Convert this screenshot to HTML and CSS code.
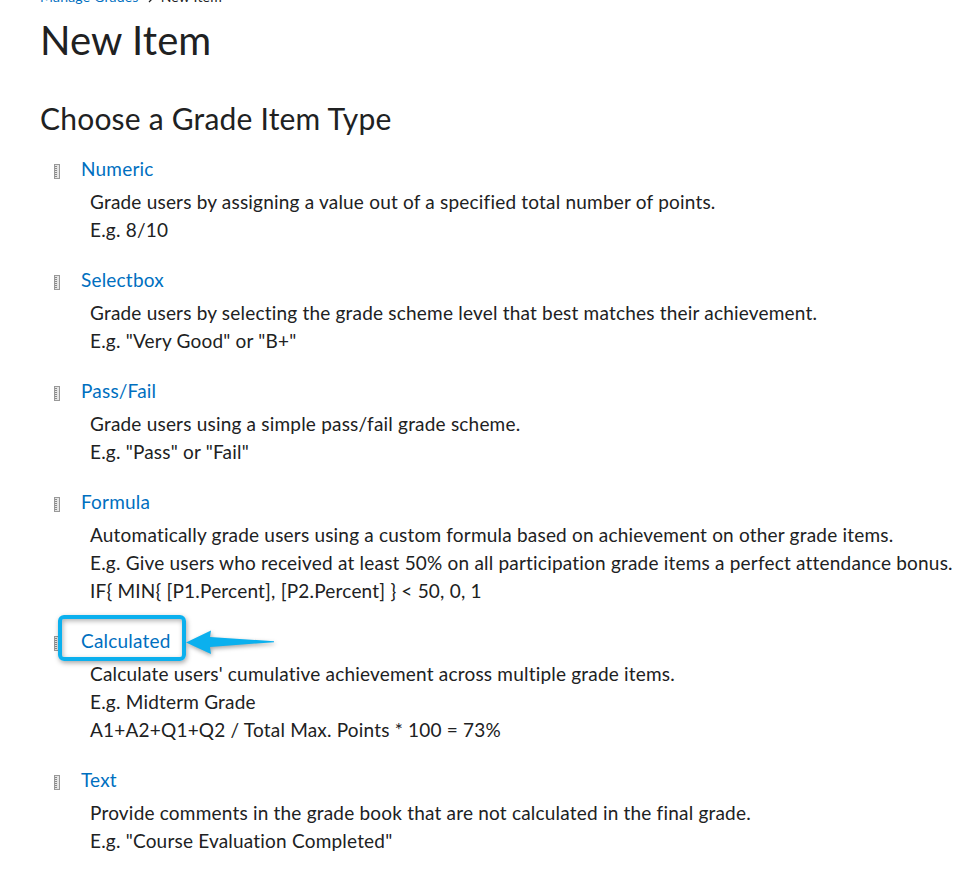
FILE: index.html
```html
<!DOCTYPE html>
<html lang="en">
<head>
  <meta charset="utf-8">
  <title>New Item</title>
  <link rel="stylesheet" href="styles.css">
</head>
<body>
  <svg class="sprite" width="0" height="0">
    <symbol id="ruler" viewBox="0 0 6 15">
      <rect x="0.5" y="0.5" width="5" height="14" fill="#e6e6e6" stroke="#999999"/>
      <path d="M1 2.5h2M1 4.5h2M1 6.5h2M1 8.5h2M1 10.5h2M1 12.5h2" stroke="#888888" fill="none"/>
    </symbol>
  </svg>

  <div class="page">
    <nav class="breadcrumb">
      <a href="#">Manage Grades</a>
      <svg class="chevron" width="6" height="10" viewBox="0 0 6 10"><path d="M1 1l4 4-4 4" fill="none" stroke="#202122" stroke-width="1.3"/></svg>
      <span>New Item</span>
    </nav>
    <h1>New Item</h1>
    <h2>Choose a Grade Item Type</h2>

    <ul class="types">
      <li>
        <div class="type-name"><svg class="icon"><use href="#ruler"/></svg><a href="#">Numeric</a></div>
        <p>Grade users by assigning a value out of a specified total number of points.<br>E.g. 8/10</p>
      </li>
      <li>
        <div class="type-name"><svg class="icon"><use href="#ruler"/></svg><a href="#">Selectbox</a></div>
        <p>Grade users by selecting the grade scheme level that best matches their achievement.<br>E.g. "Very Good" or "B+"</p>
      </li>
      <li>
        <div class="type-name"><svg class="icon"><use href="#ruler"/></svg><a href="#">Pass/Fail</a></div>
        <p>Grade users using a simple pass/fail grade scheme.<br>E.g. "Pass" or "Fail"</p>
      </li>
      <li>
        <div class="type-name"><svg class="icon"><use href="#ruler"/></svg><a href="#">Formula</a></div>
        <p>Automatically grade users using a custom formula based on achievement on other grade items.<br>E.g. Give users who received at least 50% on all participation grade items a perfect attendance bonus.<br>IF{ MIN{ [P1.Percent], [P2.Percent] } &lt; 50, 0, 1</p>
      </li>
      <li>
        <div class="type-name">
          <svg class="icon"><use href="#ruler"/></svg><a href="#">Calculated</a>
          <span class="highlight"></span>
          <svg class="arrow" width="90" height="28" viewBox="0 0 90 28"><path d="M0 14.5L25 2.5L24 9L88 13.2V14.2L24 19L25 26Z" fill="#0bb0ee"/></svg>
        </div>
        <p>Calculate users' cumulative achievement across multiple grade items.<br>E.g. Midterm Grade<br>A1+A2+Q1+Q2 / Total Max. Points * 100 = 73%</p>
      </li>
      <li>
        <div class="type-name"><svg class="icon"><use href="#ruler"/></svg><a href="#">Text</a></div>
        <p>Provide comments in the grade book that are not calculated in the final grade.<br>E.g. "Course Evaluation Completed"</p>
      </li>
    </ul>
  </div>
</body>
</html>
```

FILE: styles.css
```css
body {
  margin: 0;
  overflow: hidden;
  background-color: #ffffff;
  color: #202122;
  font-family: Lato, sans-serif;
  font-size: 19px;
  line-height: 28px;
  letter-spacing: 0.2px;
}

a {
  color: #006fbf;
  text-decoration: none;
}

.sprite {
  display: block;
}

.page {
  padding-left: 40px;
}

.breadcrumb {
  display: flex;
  align-items: center;
  height: 20px;
  margin-top: -13px;
  font-size: 14px;
  line-height: 20px;
}

.chevron {
  margin: 2px 7px 0 9px;
}

h1 {
  margin: 8px 0 0;
  font-size: 40px;
  font-weight: 400;
  line-height: 50px;
  letter-spacing: 0.1px;
}

h2 {
  margin: 33px 0 0;
  font-size: 30px;
  font-weight: 400;
  line-height: 40px;
}

.types {
  margin: 17px 0 0;
  padding: 0;
  list-style: none;
}

.types li {
  margin-bottom: 22px;
}

.type-name {
  position: relative;
  display: flex;
  align-items: center;
  height: 28px;
  padding-left: 14px;
}

.icon {
  width: 6px;
  height: 15px;
  margin: 5px 21px 0 0;
}

.types p {
  margin: 5px 0 0 50px;
  white-space: nowrap;
}

.highlight {
  position: absolute;
  left: 18px;
  top: -12px;
  width: 120px;
  height: 38px;
  border: 4px solid #0bb0ee;
  border-radius: 6px;
  box-shadow: 1px 2px 5px rgba(0, 0, 0, 0.35), inset 1px 2px 5px rgba(0, 0, 0, 0.3);
}

.arrow {
  position: absolute;
  left: 146px;
  top: 1px;
  filter: drop-shadow(1px 2px 2px rgba(0, 0, 0, 0.35));
}
```
